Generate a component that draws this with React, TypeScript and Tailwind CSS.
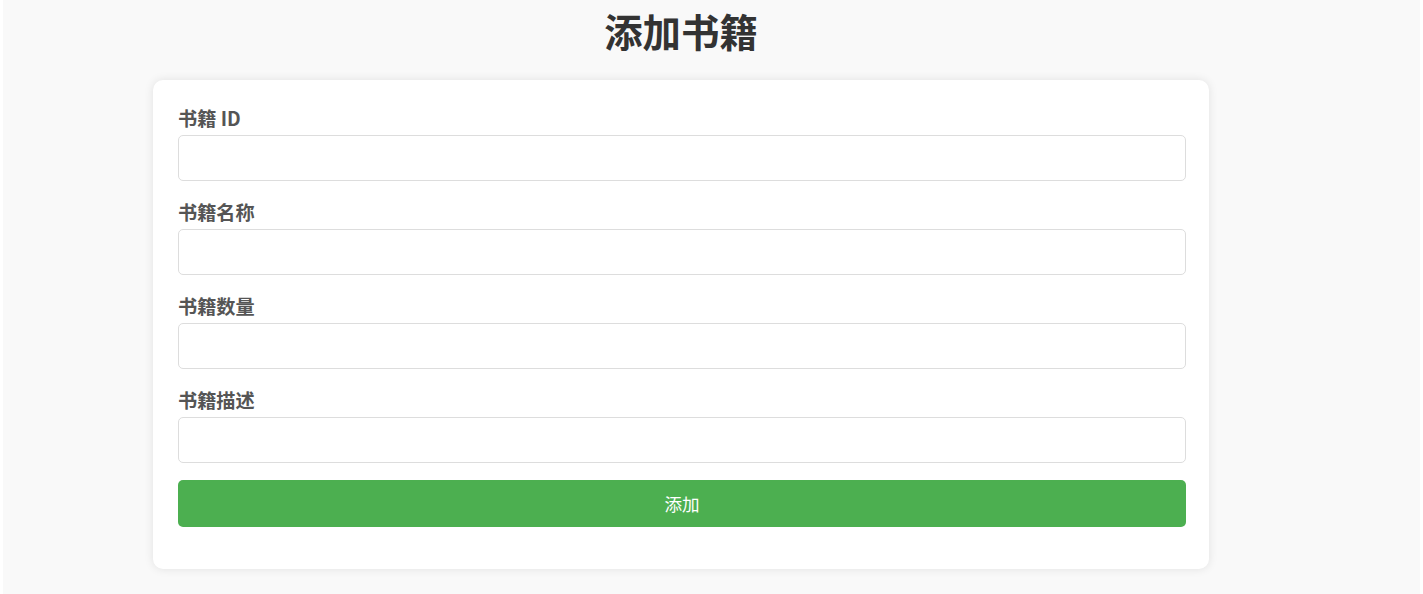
const fields = ['书籍 ID', '书籍名称', '书籍数量', '书籍描述'];

export default function App() {
  return (
    <div
      className="h-[594px] bg-white px-[3px]"
      style={{ fontFamily: '"Noto Sans CJK SC", "Noto Sans", sans-serif' }}
    >
      <div className="h-full bg-[#f9f9f9] pt-[8px]">
        <h1 className="ml-[150px] w-[1056px] text-center text-[38.4px] font-bold leading-[44px] text-[#333]">
          添加书籍
        </h1>
        <form
          className="mt-[28px] ml-[150px] w-[1056px] rounded-[10px] bg-white pl-[25px] pr-[23px] pt-[26px] pb-[42px] shadow-[0_0_10px_rgba(0,0,0,0.1)]"
          onSubmit={(e) => e.preventDefault()}
        >
          {fields.map((label, i) => (
            <div key={label} className={i === fields.length - 1 ? 'mb-[17px]' : 'mb-[19px]'}>
              <label className="mb-[5px] block text-[19.2px] font-bold leading-[24px] text-[#555]">
                {label}
              </label>
              <input
                type="text"
                className="block h-[46px] w-full rounded-[5px] border border-[#ddd] bg-white px-3 outline-none"
              />
            </div>
          ))}
          <button
            type="submit"
            className="block h-[47px] w-full rounded-[5px] bg-[#4caf50] text-[17.6px] leading-[47px] text-white"
          >
            添加
          </button>
        </form>
      </div>
    </div>
  );
}
